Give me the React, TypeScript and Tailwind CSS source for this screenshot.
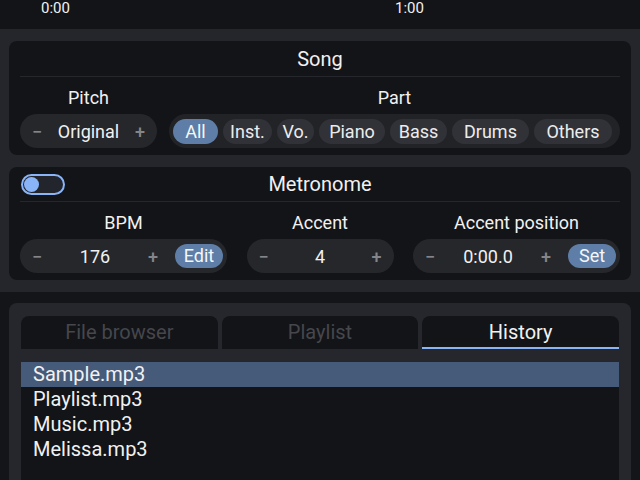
import type { ReactNode } from 'react';

const PARTS: { label: string; width: string }[] = [
  { label: 'All', width: 'w-[45px]' },
  { label: 'Inst.', width: 'w-[49px]' },
  { label: 'Vo.', width: 'w-[37px]' },
  { label: 'Piano', width: 'w-[66px]' },
  { label: 'Bass', width: 'w-[57px]' },
  { label: 'Drums', width: 'w-[77px]' },
  { label: 'Others', width: 'w-[78px]' },
];

const TABS = ['File browser', 'Playlist', 'History'];
const FILES = ['Sample.mp3', 'Playlist.mp3', 'Music.mp3', 'Melissa.mp3'];

function Stepper({
  value,
  width,
  action,
}: {
  value: string;
  width: string;
  action?: string;
}) {
  return (
    <div className={`flex h-[34px] items-center rounded-full bg-[#26272b] ${width}`}>
      <span className="w-[34px] text-center text-[18px] font-medium text-[#84858a]">−</span>
      <span className="flex-1 text-center text-[18px] text-[#f1f1f1]">{value}</span>
      <span className="w-[34px] text-center text-[18px] font-medium text-[#84858a]">+</span>
      {action && (
        <button className="mr-[4px] ml-[5px] h-[24px] w-[48px] rounded-full bg-[#5e7ea7] text-[18px] leading-[24px] text-[#f4f6f9]">
          {action}
        </button>
      )}
    </div>
  );
}

function Field({ label, children }: { label: string; children: ReactNode }) {
  return (
    <div className="flex flex-col items-center">
      <div className="h-[24px] text-[18px] leading-[24px] text-[#f1f1f1]">{label}</div>
      <div className="mt-[4px]">{children}</div>
    </div>
  );
}

function Panel({ header, children }: { header: ReactNode; children: ReactNode }) {
  return (
    <section className="rounded-lg bg-[#131418] px-[11px] pb-[7px]">
      {header}
      <div className="h-px bg-[#26272c]" />
      <div className="mt-[9px]">{children}</div>
    </section>
  );
}

export default function App() {
  return (
    <div className="h-[480px] w-[640px] overflow-hidden bg-[#141519] font-['Roboto',sans-serif] text-[#f1f1f1]">
      {/* timeline ruler */}
      <div className="flex h-[29px] bg-[#131418] pl-[41px] text-[15px] leading-[16px]">
        <span className="w-[354px]">0:00</span>
        <span>1:00</span>
      </div>

      <div className="flex flex-col gap-[12px] bg-[#25262b] px-[9px] py-[12px]">
        <Panel
          header={
            <div className="flex h-[35px] items-center justify-center text-[20px] leading-[24px]">Song</div>
          }
        >
          <div className="flex gap-[12px]">
            <Field label="Pitch">
              <Stepper value="Original" width="w-[137px]" />
            </Field>
            <div className="flex flex-1 flex-col items-center">
              <div className="h-[24px] text-[18px] leading-[24px]">Part</div>
              <div className="mt-[4px] flex h-[34px] w-full items-center gap-[5px] rounded-full bg-[#222327] pl-[4px]">
                {PARTS.map((part, i) => (
                  <button
                    key={part.label}
                    className={`h-[25px] rounded-full text-[18px] leading-[25px] ${part.width} ${
                      i === 0 ? 'bg-[#5e7ea7] text-[#f4f6f9]' : 'bg-[#313237] text-[#ececec]'
                    }`}
                  >
                    {part.label}
                  </button>
                ))}
              </div>
            </div>
          </div>
        </Panel>

        <Panel
          header={
            <div className="grid h-[34px] grid-cols-[1fr_auto_1fr] items-center">
              <div className="ml-[1px] flex h-[21px] w-[44px] items-center rounded-full border-2 border-[#8ab4f8] bg-[#22252c] pl-[1px]">
                <span className="h-[15px] w-[15px] rounded-full bg-[#8ab4f8]" />
              </div>
              <div className="text-[20px] leading-[24px]">Metronome</div>
              <div />
            </div>
          }
        >
          <div className="flex justify-between">
            <Field label="BPM">
              <Stepper value="176" width="w-[207px]" action="Edit" />
            </Field>
            <Field label="Accent">
              <Stepper value="4" width="w-[147px]" />
            </Field>
            <Field label="Accent position">
              <Stepper value="0:00.0" width="w-[207px]" action="Set" />
            </Field>
          </div>
        </Panel>
      </div>

      <div className="px-[9px] pt-[11px]">
        <section className="h-[200px] rounded-lg bg-[#26272c] px-[12px] pt-[13px]">
          <div className="grid grid-cols-3 gap-[4px]">
            {TABS.map((tab, i) => (
              <div
                key={tab}
                className={`flex h-[33px] items-center justify-center rounded-t-lg border-b-2 bg-[#131418] text-[20px] ${
                  i === 2 ? 'border-[#8ab4f8] text-[#f1f1f1]' : 'border-transparent text-[#46474c]'
                }`}
              >
                {tab}
              </div>
            ))}
          </div>
          <ul className="mt-[13px] h-[140px] bg-[#131418]">
            {FILES.map((file, i) => (
              <li
                key={file}
                className={`h-[25px] pl-[12px] text-[20px] leading-[25px] ${i === 0 ? 'bg-[#465b79]' : ''}`}
              >
                {file}
              </li>
            ))}
          </ul>
        </section>
      </div>
    </div>
  );
}
